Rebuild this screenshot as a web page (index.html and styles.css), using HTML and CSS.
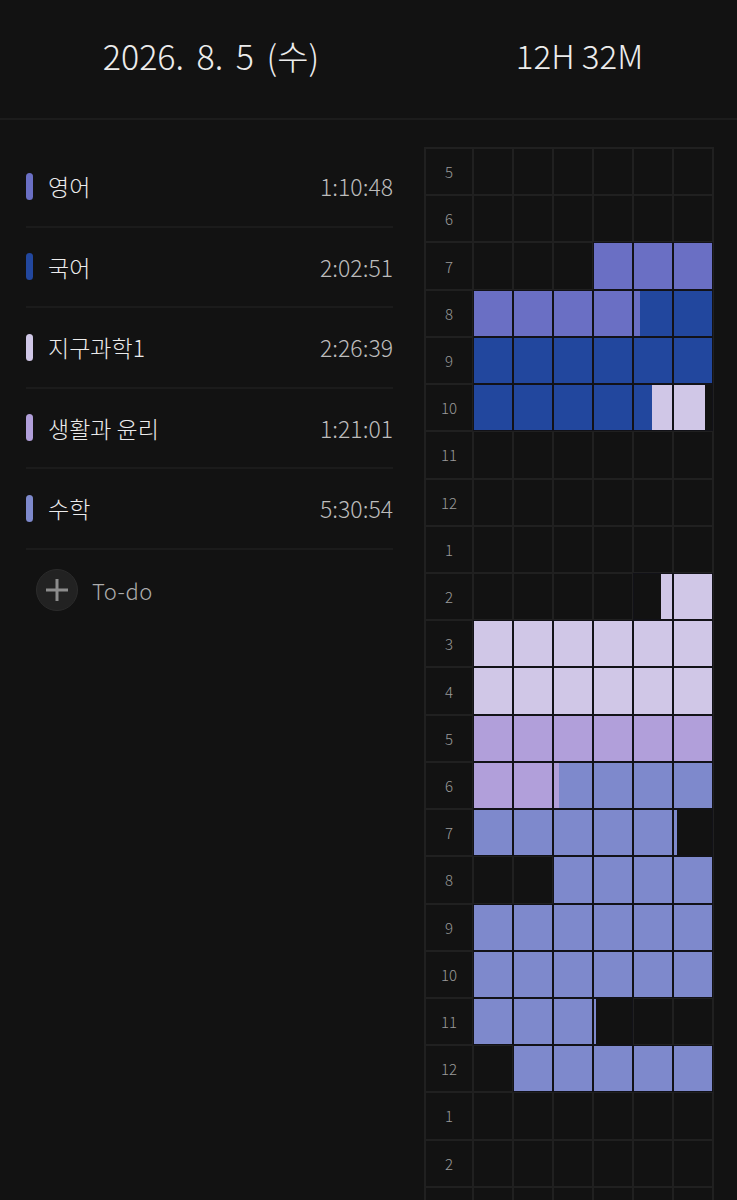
FILE: index.html
```html
<html>
<head>
	<meta charset="utf-8">
	<link rel="stylesheet" href="styles.css">
</head>
<body>
	<div class="header">
		<div class="date">2026. 8. 5 (수)</div>
		<div class="total">12H 32M</div>
	</div>

	<div class="main">
		<div class="subjects">
			<div class="subject">
				<span class="bar c-eng"></span>
				<span class="name">영어</span>
				<span class="time">1:10:48</span>
			</div>
			<div class="subject">
				<span class="bar c-kor"></span>
				<span class="name">국어</span>
				<span class="time">2:02:51</span>
			</div>
			<div class="subject">
				<span class="bar c-earth"></span>
				<span class="name">지구과학1</span>
				<span class="time">2:26:39</span>
			</div>
			<div class="subject">
				<span class="bar c-ethics"></span>
				<span class="name">생활과 윤리</span>
				<span class="time">1:21:01</span>
			</div>
			<div class="subject">
				<span class="bar c-math"></span>
				<span class="name">수학</span>
				<span class="time">5:30:54</span>
			</div>
			<div class="todo">
				<span class="add">
					<svg width="24" height="24" viewBox="0 0 24 24"><path d="M12 1v22M1 12h22" stroke="#8c8c8c" stroke-width="3" fill="none"/></svg>
				</span>
				<span>To-do</span>
			</div>
		</div>

		<div class="timetable">
			<div id="grid" class="grid"></div>
		</div>
	</div>

	<script>
		const colors = {
			A : '#6a6fc4',
			B : '#22479e',
			C : '#d0c7e7',
			D : '#b19fda',
			E : '#7e89cc'
		};

		// each row: hour label + 6 ten-minute cells
		// a cell is '' (empty), a letter (full) or a list of [color, from%, to%]
		const rows = [
			['5', ['', '', '', '', '', '']],
			['6', ['', '', '', '', '', '']],
			['7', ['', '', '', 'A', 'A', 'A']],
			['8', ['A', 'A', 'A', 'A', [['A', 0, 16], ['B', 16, 100]], 'B']],
			['9', ['B', 'B', 'B', 'B', 'B', 'B']],
			['10', ['B', 'B', 'B', 'B', [['B', 0, 47], ['C', 47, 100]], [['C', 0, 82]]]],
			['11', ['', '', '', '', '', '']],
			['12', ['', '', '', '', '', '']],
			['1', ['', '', '', '', '', '']],
			['2', ['', '', '', '', [['C', 70, 100]], 'C']],
			['3', ['C', 'C', 'C', 'C', 'C', 'C']],
			['4', ['C', 'C', 'C', 'C', 'C', 'C']],
			['5', ['D', 'D', 'D', 'D', 'D', 'D']],
			['6', ['D', 'D', [['D', 0, 14], ['E', 14, 100]], 'E', 'E', 'E']],
			['7', ['E', 'E', 'E', 'E', 'E', [['E', 0, 8]]]],
			['8', ['', '', 'E', 'E', 'E', 'E']],
			['9', ['E', 'E', 'E', 'E', 'E', 'E']],
			['10', ['E', 'E', 'E', 'E', 'E', 'E']],
			['11', ['E', 'E', 'E', [['E', 0, 5]], '', '']],
			['12', ['', 'E', 'E', 'E', 'E', 'E']],
			['1', ['', '', '', '', '', '']],
			['2', ['', '', '', '', '', '']],
			['', ['', '', '', '', '', '']]
		];

		function cellGradient(cell){
			const stops = [];
			let pos = 0;
			for(let [c, from, to] of cell){
				if(from > pos) stops.push('transparent ' + pos + '% ' + from + '%');
				stops.push(colors[c] + ' ' + from + '% ' + to + '%');
				pos = to;
			}
			if(pos < 100) stops.push('transparent ' + pos + '% 100%');

			return 'linear-gradient(to right, ' + stops.join(', ') + ')';
		}

		const grid = document.getElementById('grid');

		for(let [label, cells] of rows){
			const hour = document.createElement('div');
			hour.className = 'hour';
			hour.textContent = label;
			grid.appendChild(hour);

			for(let cell of cells){
				const el = document.createElement('div');
				el.className = 'cell';
				if(typeof cell === 'string' && cell){
					el.classList.add('filled');
					el.style.backgroundColor = colors[cell];
				} else if(cell){
					el.classList.add('filled');
					el.style.backgroundImage = cellGradient(cell);
				}
				grid.appendChild(el);
			}
		}
	</script>
</body>
</html>
```

FILE: styles.css
```css
html, body{
	margin: 0;
	background: #121212;
	overflow: hidden;
}

body{
	font-family: "Noto Sans CJK KR", "Noto Sans", sans-serif;
	font-weight: 300;
	color: #ececec;
}

.header{
	display: grid;
	grid-template-columns: 422px 1fr;
	align-items: center;
	height: 110px;
	padding-bottom: 8px;
	border-bottom: 2px solid #1c1c1c;
	font-size: 33px;
	text-align: center;
}

.date{
	font-size: 34px;
	word-spacing: 5px;
}

.main{
	display: grid;
	grid-template-columns: 422px 1fr;
	padding-top: 27px;
}

.subjects{
	padding: 0 29px 0 26px;
}

.subject{
	display: flex;
	align-items: center;
	height: 78.5px;
	border-bottom: 2px solid #1b1b1b;
}

.bar{
	width: 7px;
	height: 27px;
	border-radius: 4px;
	margin-right: 15px;
}

.name{
	font-size: 23px;
	flex: 1;
}

.time{
	font-size: 23px;
	color: #bcbcbc;
}

.c-eng{ background: #6a6fc4; }
.c-kor{ background: #22479e; }
.c-earth{ background: #d0c7e7; }
.c-ethics{ background: #b19fda; }
.c-math{ background: #7e89cc; }

.todo{
	display: flex;
	align-items: center;
	height: 80px;
	font-size: 22px;
	letter-spacing: 0.5px;
	color: #acacac;
}

.add{
	display: flex;
	align-items: center;
	justify-content: center;
	width: 40px;
	height: 40px;
	margin: 0 14px 0 10px;
	border-radius: 50%;
	background: #222;
	border: 1px solid #2b2b2b;
}

.timetable{
	padding-left: 2px;
}

.grid{
	display: grid;
	grid-template-columns: 46px repeat(6, 38px);
	grid-auto-rows: 45.23px;
	gap: 2px;
	padding: 2px;
	width: max-content;
	background: #202020;
}

.hour, .cell{
	background-color: #121212;
}

.hour{
	display: flex;
	align-items: center;
	justify-content: center;
	font-size: 15px;
	color: #9a9a9a;
}

.cell.filled{
	outline: 1px solid #121218;
}
```
